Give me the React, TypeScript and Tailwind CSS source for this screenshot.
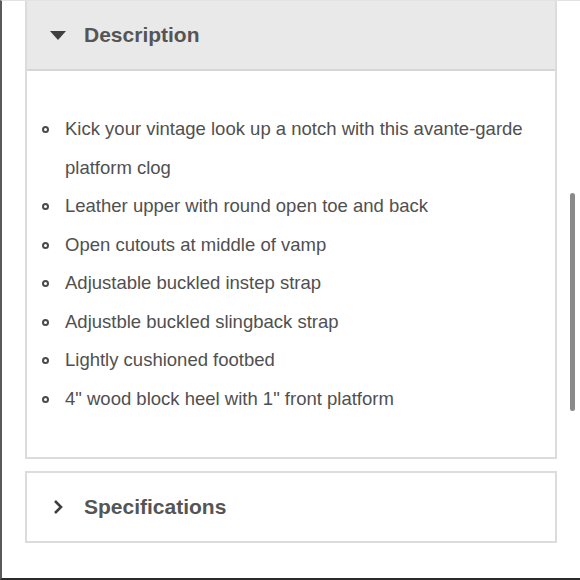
import React from "react";

const features = [
  "Kick your vintage look up a notch with this avante-garde platform clog",
  "Leather upper with round open toe and back",
  "Open cutouts at middle of vamp",
  "Adjustable buckled instep strap",
  "Adjustble buckled slingback strap",
  "Lightly cushioned footbed",
  '4" wood block heel with 1" front platform',
];

const font = { fontFamily: '"Liberation Sans", Arial, sans-serif' };

export default function App() {
  return (
    <div
      className="relative w-[580px] h-[580px] bg-white border-l-2 border-l-[#5a5a5a] border-b-2 border-b-[#2a2a2a] border-t border-t-[#e2e2e2] overflow-hidden"
      style={font}
    >
      <div className="flex flex-col gap-[12px] pl-[23px] w-[555px]">
        {/* Description panel */}
        <section className="border-2 border-t-0 border-[#dcdcdc] h-[458px] flex flex-col">
          <button className="flex items-center h-[70px] bg-[#e9e9e9] border-b-2 border-[#d6d6d6] pl-[23px] text-left">
            <svg width="16" height="9" viewBox="0 0 16 9" className="mr-[18px]">
              <polygon points="0,0 16,0 8,9" fill="#3f3f3f" />
            </svg>
            <span className="text-[21px] font-bold text-[#555555]">Description</span>
          </button>
          <ul className="pt-[39px] pl-[15px] pr-[10px] text-[18.5px] leading-[38.5px] text-[#505050]">
            {features.map((f) => (
              <li key={f} className="flex items-start">
                <span className="shrink-0 w-[7px] h-[7px] mt-[16px] rounded-full border-2 border-[#4a4a4a]" />
                <span className="ml-[16px] w-[470px]">{f}</span>
              </li>
            ))}
          </ul>
        </section>

        {/* Specifications panel */}
        <section className="border-2 border-[#dcdcdc] h-[72px] flex items-center pl-[25px]">
          <svg width="12" height="16" viewBox="0 0 12 16" className="mr-[20px]">
            <polyline points="3,2 9,8 3,14" fill="none" stroke="#3f3f3f" strokeWidth="2.6" />
          </svg>
          <span className="text-[21px] font-bold text-[#555555]">Specifications</span>
        </section>
      </div>

      {/* scrollbar thumb */}
      <div className="absolute left-[568px] top-[192px] w-[5px] h-[218px] rounded-full bg-[#8a8a8a]" />
    </div>
  );
}
